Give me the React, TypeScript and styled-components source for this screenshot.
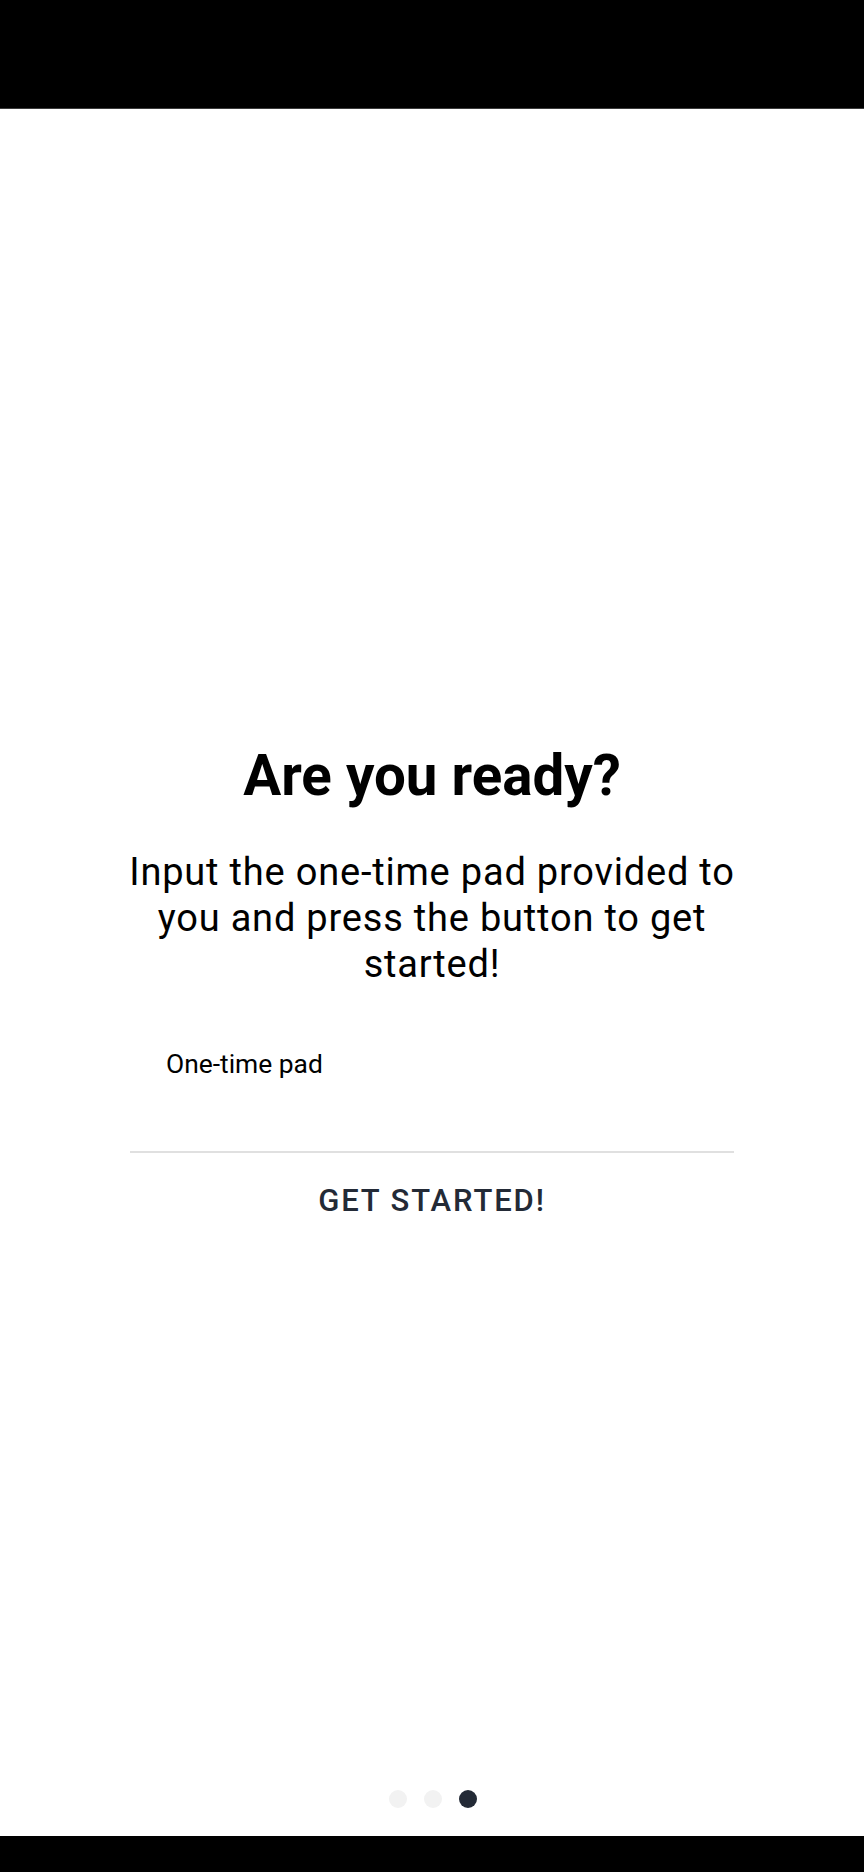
import React from "react";
import styled, { createGlobalStyle } from "styled-components";

const GlobalStyle = createGlobalStyle`
  html, body {
    margin: 0;
    padding: 0;
    background: #ffffff;
  }
  body {
    font-family: Roboto, "Noto Sans", "Liberation Sans", sans-serif;
    -webkit-font-smoothing: antialiased;
  }
  * { box-sizing: border-box; }
`;

const Screen = styled.div`
  width: 864px;
  height: 1872px;
  display: flex;
  flex-direction: column;
  background: #ffffff;
  overflow: hidden;
`;

const StatusBar = styled.div`
  height: 109px;
  flex: none;
  background: #000000;
  border-bottom: 1px solid #3c3c3c;
`;

const NavBar = styled.div`
  height: 36px;
  flex: none;
  background: #000000;
`;

const Main = styled.main`
  flex: 1;
  display: flex;
  flex-direction: column;
  align-items: center;
  padding-top: 634px;
`;

const Column = styled.div`
  width: 604px;
  display: flex;
  flex-direction: column;
  align-items: stretch;
`;

const Title = styled.h1`
  margin: 0;
  font-size: 56.5px;
  line-height: 66px;
  font-weight: 700;
  color: #000000;
  text-align: center;
`;

const Lead = styled.p`
  margin: 40px -14px 0;
  font-size: 38px;
  line-height: 46px;
  font-weight: 400;
  letter-spacing: 0.8px;
  color: #000000;
  text-align: center;
`;

const Field = styled.label`
  margin-top: 61px;
  display: flex;
  flex-direction: column;
  padding: 0 36px;
  height: 105px;
  border-bottom: 2px solid #e0e0e0;
`;

const FieldLabel = styled.span`
  font-size: 26.4px;
  line-height: 32px;
  color: #000000;
`;

const ActionButton = styled.button`
  margin-top: 29px;
  align-self: center;
  border: none;
  background: transparent;
  padding: 0;
  font-family: inherit;
  font-size: 31px;
  line-height: 37px;
  font-weight: 500;
  letter-spacing: 1.9px;
  text-transform: uppercase;
  color: #232a36;
  cursor: pointer;
`;

const Pager = styled.div`
  flex: none;
  display: flex;
  justify-content: center;
  gap: 17px;
  padding-bottom: 28px;
  padding-left: 1px;
`;

const Dot = styled.span<{ $active?: boolean }>`
  width: 18px;
  height: 18px;
  border-radius: 50%;
  background: ${(p) => (p.$active ? "#232a36" : "#f2f2f2")};
`;

export default function App() {
  return (
    <>
      <GlobalStyle />
      <Screen>
        <StatusBar />
        <Main>
          <Column>
            <Title>Are you ready?</Title>
            <Lead>
              Input the one-time pad provided to you and press the button to
              get started!
            </Lead>
            <Field>
              <FieldLabel>One-time pad</FieldLabel>
            </Field>
            <ActionButton type="button">Get started!</ActionButton>
          </Column>
        </Main>
        <Pager>
          <Dot />
          <Dot />
          <Dot $active />
        </Pager>
        <NavBar />
      </Screen>
    </>
  );
}
